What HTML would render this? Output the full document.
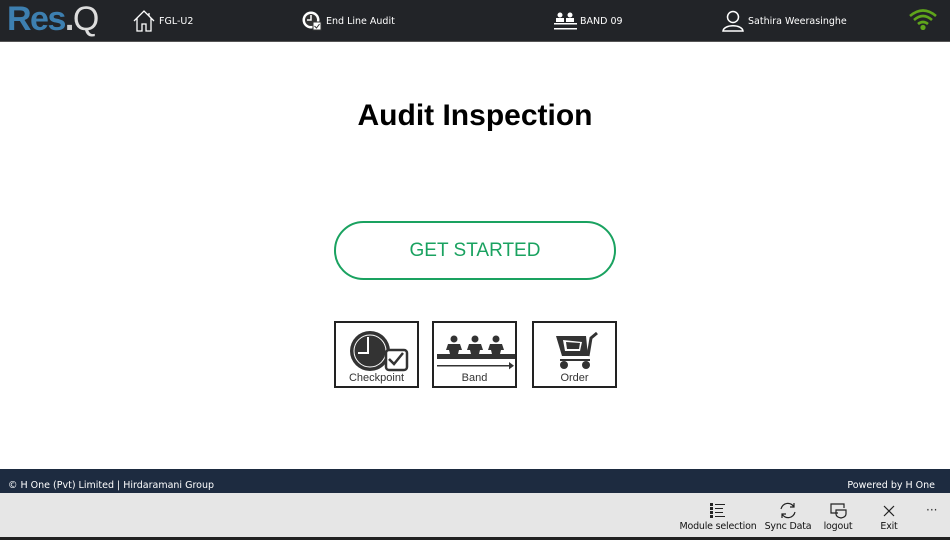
<!DOCTYPE html>
<html><head><style>
*{margin:0;padding:0;box-sizing:border-box}
body{width:950px;height:540px;position:relative;background:#fff;font-family:"DejaVu Sans","Liberation Sans",sans-serif;overflow:hidden}
.hdr{position:absolute;left:0;top:0;width:950px;height:42px;background:#222428;border-bottom:1px solid #555;color:#fff;font-size:9.5px}
.hdr .t{position:absolute;top:16px}
.title{position:absolute;top:99px;width:950px;text-align:center;font:bold 30px "Liberation Sans",sans-serif;color:#000}
.btn{position:absolute;left:334px;top:221px;width:282px;height:59px;border:2px solid #1aa260;border-radius:30px;text-align:center;color:#1aa260;font:19px/55px "Liberation Sans",sans-serif}
.tile{position:absolute;top:321px;width:85px;height:67px;border:2px solid #222;background:#fff}
.tile span{position:absolute;bottom:2px;width:100%;text-align:center;font:11px "Liberation Sans",sans-serif;color:#333}
.ft{position:absolute;top:469px;left:0;width:950px;height:24px;background:#1d2b40;color:#fff;font-size:9.5px}
.bb{position:absolute;top:493px;left:0;width:950px;height:44px;background:#e6e6e6}
.bot{position:absolute;top:537px;left:0;width:950px;height:3px;background:#222}
.bi{position:absolute;top:521px;font-size:9.5px;color:#111;transform:translateX(-50%);white-space:nowrap;letter-spacing:-0.2px}
</style></head><body>
<div class="hdr">
<div style="position:absolute;left:7px;top:0px;font:bold 34px 'Liberation Sans',sans-serif;color:#3d7fb0;letter-spacing:-1.5px">Res<span style="color:#ccc">.</span><span style="color:#ddd;font-weight:normal">Q</span></div>
<svg style="position:absolute;left:132px;top:9px" width="24" height="24" viewBox="0 0 24 24" fill="none" stroke="#fff" stroke-width="1.3"><path d="M2 12 L12 2 L22 12 M5 9 V22 H10 V15 H14 V22 H19 V9 M17 4 V7"/></svg>
<span class="t" style="left:159px">FGL-U2</span>
<svg style="position:absolute;left:302px;top:11px" width="20" height="20" viewBox="0 0 20 20"><circle cx="9" cy="9" r="8.5" fill="#fff"/><circle cx="9" cy="9" r="6" fill="#333"/><path d="M9 4V9H5" stroke="#fff" stroke-width="1.5" fill="none"/><rect x="11" y="11" width="8" height="8" fill="#fff" stroke="#333"/><path d="M12.5 15l2 2 3-4" stroke="#333" fill="none"/></svg>
<span class="t" style="left:326px">End Line Audit</span>
<svg style="position:absolute;left:553px;top:12px" width="25" height="20" viewBox="0 0 25 20" fill="#fff"><circle cx="7" cy="3" r="2.5"/><circle cx="17" cy="3" r="2.5"/><rect x="3" y="6" width="8" height="4"/><rect x="13" y="6" width="8" height="4"/><rect x="1" y="11" width="23" height="1.5"/><rect x="1" y="16" width="23" height="1.5"/></svg>
<span class="t" style="left:580px">BAND 09</span>
<svg style="position:absolute;left:721px;top:9px" width="24" height="24" viewBox="0 0 24 24" fill="none" stroke="#fff" stroke-width="1.5"><circle cx="12" cy="8" r="5.5"/><path d="M2 22 C3 15 21 15 22 22 Z"/></svg>
<span class="t" style="left:748px">Sathira Weerasinghe</span>
<svg style="position:absolute;left:908px;top:8px" width="30" height="22" viewBox="0 0 30 22" fill="none" stroke="#5fa51b" stroke-width="2.6"><path d="M2 8 Q15 -3 28 8"/><path d="M6 12 Q15 4 24 12"/><path d="M10 16 Q15 12 20 16"/><circle cx="15" cy="19.5" r="1.3" fill="#5fa51b"/></svg>
</div>
<div class="title">Audit Inspection</div>
<div class="btn">GET STARTED</div>
<div class="tile" style="left:334px"><svg style="position:absolute;left:10px;top:5px" width="64" height="46" viewBox="0 0 64 46"><circle cx="24" cy="23" r="20" fill="#333"/><circle cx="24" cy="23" r="16" fill="#333" stroke="#fff" stroke-width="1"/><path d="M22 9V25H12" stroke="#fff" stroke-width="2" fill="none"/><rect x="40" y="22" width="21" height="20" rx="3" fill="#fff" stroke="#333" stroke-width="2.5"/><path d="M43 31l5 5 9-11" stroke="#333" stroke-width="2.5" fill="none"/></svg><span>Checkpoint</span></div>
<div class="tile" style="left:432px"><svg style="position:absolute;left:3px;top:12px" width="78" height="36" viewBox="0 0 78 36" fill="#333"><g id="p"><circle cx="17" cy="4" r="3.5"/><path d="M11 9h12l2 6h-3l-1 4h-8l-1-4h-3z"/></g><use href="#p" x="21"/><use href="#p" x="42"/><rect x="0" y="19" width="78" height="5"/><rect x="0" y="30" width="74" height="1.5"/><path d="M72 27l5 3.7-5 3.7z"/></svg><span>Band</span></div>
<div class="tile" style="left:532px"><svg style="position:absolute;left:20px;top:7px" width="46" height="40" viewBox="0 0 46 40"><path d="M2 6h30l2 20H8z" fill="#333"/><path d="M9 10l19 2-2 9H11z" fill="#fff"/><path d="M12 12l14 1-1 6H13z" fill="#333"/><path d="M34 26l3-18 6-5" stroke="#333" stroke-width="3" fill="none"/><path d="M6 30h30" stroke="#333" stroke-width="2"/><circle cx="10" cy="35" r="4" fill="#333"/><circle cx="32" cy="35" r="4" fill="#333"/></svg><span>Order</span></div>
<div class="ft"><span style="position:absolute;left:8px;top:11px">© H One (Pvt) Limited | Hirdaramani Group</span><span style="position:absolute;right:15px;top:11px">Powered by H One</span></div>
<div class="bb"></div>
<svg style="position:absolute;left:710px;top:503px" width="16" height="15" viewBox="0 0 16 15" fill="#222"><rect x="0" y="0" width="3" height="3"/><rect x="0" y="4" width="3" height="3"/><rect x="0" y="8" width="3" height="3"/><rect x="0" y="12" width="3" height="3"/><rect x="5" y="1" width="10" height="1"/><rect x="5" y="5" width="8" height="1"/><rect x="5" y="9" width="8" height="1"/><rect x="5" y="13" width="10" height="1"/></svg>
<svg style="position:absolute;left:779px;top:502px" width="18" height="17" viewBox="0 0 18 17" fill="none" stroke="#222" stroke-width="1.2"><path d="M2 7A7 7 0 0 1 15 5M16 10A7 7 0 0 1 3 12M15 1V5H11M3 16V12H7"/></svg>
<svg style="position:absolute;left:830px;top:503px" width="18" height="16" viewBox="0 0 18 16" fill="none" stroke="#222" stroke-width="1.2"><path d="M8 10H1V1H14V5"/><path d="M6 7H16V11Q16 14 11 15Q6 14 6 11Z"/></svg>
<svg style="position:absolute;left:883px;top:505px" width="12" height="12" viewBox="0 0 12 12" stroke="#222" stroke-width="1.2"><path d="M1 1L11 11M11 1L1 11"/></svg>
<span style="position:absolute;left:926px;top:503px;font-size:12px;color:#333">···</span>
<span class="bi" style="left:718px">Module selection</span>
<span class="bi" style="left:788px">Sync Data</span>
<span class="bi" style="left:838px">logout</span>
<span class="bi" style="left:889px">Exit</span>
<div class="bot"></div>
</body></html>
